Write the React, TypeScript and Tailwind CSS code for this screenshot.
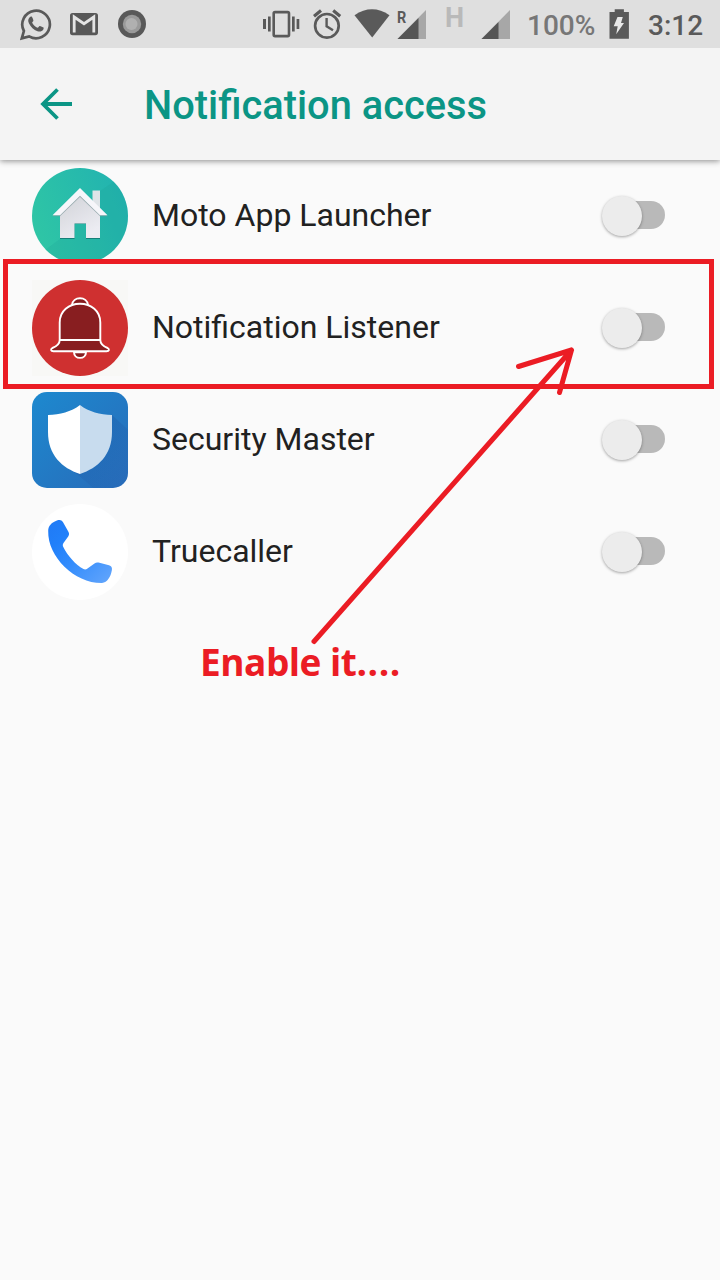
import type { ReactNode } from "react";

function WhatsAppIcon() {
  return (
    <svg className="ml-5 h-12 w-8 shrink-0" viewBox="20 0 32 48" fill="none">
      <path d="M21.8 38.400l2.100-7.400a13.800 13.800 0 1 1 5.200 5.400z" stroke="#5a5a5a" strokeWidth="2.700" strokeLinejoin="miter" />
      <path
        d="M31.200 16.600c-.6 0-1.200.3-1.700.9-1.400 1.400-1.700 3.500-.6 5.700 2.100 4 4.700 6.500 8.600 8 2.400.9 4.600.2 5.700-1.400.5-.8.6-1.900.3-2.200-.4-.5-2.900-1.600-3.700-1.700-.8-.1-1.500 1.900-2.300 1.800-1.900-.6-4.500-3.200-5.300-5-.2-.7 1.200-1.300 1.200-2.200 0-.7-1.100-3.200-1.500-3.700-.2-.2-.5-.2-.7-.2z"
        fill="#5a5a5a"
      />
    </svg>
  );
}

function GmailIcon() {
  return (
    <svg className="ml-[18px] h-12 w-7 shrink-0" viewBox="70 0 28 48" fill="none">
      <rect x="70" y="13" width="28" height="22.200" rx="2.600" fill="#585858" />
      <path d="M74.200 32.500V17L84 23.700 93.800 17v15.500" stroke="#e4e4e4" strokeWidth="2.800" />
    </svg>
  );
}

function RecordIcon() {
  return (
    <svg className="ml-5 h-12 w-[29px] shrink-0" viewBox="118 0 29 48">
      <circle cx="132" cy="24" r="14" fill="#595959" />
      <circle cx="132" cy="24" r="9.200" fill="#9a9a9a" />
      <circle cx="131.500" cy="24" r="6" fill="#b0b0b0" />
    </svg>
  );
}

function VibrateIcon() {
  return (
    <svg className="ml-[116px] h-12 w-[37px] shrink-0" viewBox="263 0 37 48">
      <rect x="273.700" y="12.100" width="15.300" height="24" rx="1.300" fill="none" stroke="#5a5a5a" strokeWidth="2.600" />
      <path d="M263 19h3v10h-3zM268 16.500h2.700v15H268zM292 16.500h2.700v15H292zM296.600 19h2.700v10h-2.700z" fill="#5a5a5a" />
    </svg>
  );
}

function AlarmIcon() {
  return (
    <svg className="ml-3 h-12 w-[30px] shrink-0" viewBox="312 0 30 48" fill="none" stroke="#5a5a5a">
      <circle cx="326.900" cy="25.800" r="11.800" strokeWidth="2.700" />
      <path d="M326.600 18v8.300l6.400 4" strokeWidth="2.400" />
      <path d="M314 16.200l7-5.600M333.200 10.600l7 5.600" strokeWidth="3.200" />
    </svg>
  );
}

function WifiIcon() {
  return (
    <svg className="ml-3 h-12 w-9 shrink-0" viewBox="354 0 36 48">
      <path d="M354.500 15.200Q372 3.500 389.500 15.200L372.200 37.600z" fill="#5a5a5a" />
    </svg>
  );
}

function SignalIcon({ split }: { split: number }) {
  return (
    <svg className="h-12 w-[29px] shrink-0" viewBox="0 0 29 48">
      <path d="M0.500 39L29 10v29z" fill="#a7a7a7" />
      <path d={`M0.500 39L${split} ${39.500 - split}V39z`} fill="#555" />
    </svg>
  );
}

function BatteryIcon() {
  return (
    <svg className="ml-[14px] h-12 w-5 shrink-0" viewBox="608.500 0 20 48">
      <path d="M609 12h5.200V9.300h9.200V12h5v26.800H609z" fill="#5a5a5a" />
      <path d="M617 17h5.300l-1.800 6h3l-7.800 11.300 1.500-8h-4z" fill="#e8e8e8" />
    </svg>
  );
}

function StatusBar() {
  return (
    <div className="relative z-20 flex h-12 items-center bg-[#dfdfdf] text-[28px] leading-[48px] font-medium">
      <WhatsAppIcon />
      <GmailIcon />
      <RecordIcon />
      <VibrateIcon />
      <AlarmIcon />
      <WifiIcon />
      <div className="relative ml-[7px] shrink-0">
        <SignalIcon split={21.5} />
        <span className="absolute top-[9px] left-0 origin-left scale-x-85 text-[17px] leading-[17px] font-bold text-[#5a5a5a]">R</span>
      </div>
      <span className="ml-[19px] w-5 shrink-0 pb-[12px] text-[27px] leading-[35px] font-bold text-[#b9b9b9]">H</span>
      <div className="ml-[16px] shrink-0">
        <SignalIcon split={17.5} />
      </div>
      <span className="ml-[17px] w-[68px] shrink-0 pt-[4px] text-[#777]">100%</span>
      <BatteryIcon />
      <span className="ml-[19px] shrink-0 pt-[4px] text-[#5a5a5a]">3:12</span>
    </div>
  );
}

function HomeAppIcon() {
  return (
    <svg className="size-24" viewBox="0 0 96 96">
      <defs>
        <linearGradient id="home-bg" x1="0" y1="0.700" x2="1" y2="0.300">
          <stop stopColor="#2fc6a5" />
          <stop offset="1" stopColor="#22b3b0" />
        </linearGradient>
        <linearGradient id="home-wall" x1="0" y1="0" x2="0.500" y2="1">
          <stop stopColor="#cfd1d6" />
          <stop offset="1" stopColor="#ececf2" />
        </linearGradient>
        <clipPath id="home-clip"><circle cx="48" cy="48" r="48" /></clipPath>
      </defs>
      <g clipPath="url(#home-clip)">
        <rect width="96" height="96" fill="url(#home-bg)" />
        <path d="M68 23L84 12 100 20v70L40 110 10 84 28 71z" fill="#1b9e94" opacity="0.220" />
      </g>
      <path d="M60.500 22.500h7.500v20h-7.500z" fill="#dfe4e8" />
      <path d="M28 71V44l20-19 20 19v27H54V56H42.500v15z" fill="#167f79" />
      <path d="M28 70V44l20-19 20 19v26H54V55.500H42.500V70z" fill="url(#home-wall)" />
      <path d="M20.500 48.300L48 21.500l27.500 26.800H68L48 29 28 48.300z" fill="#7f989b" opacity="0.700" />
      <path d="M20.500 47.300L48 20l27.500 27.300H68L48 27.800 28 47.300z" fill="#f6f6fa" />
    </svg>
  );
}

function BellAppIcon() {
  return (
    <svg className="size-24" viewBox="0 0 96 96">
      <rect width="96" height="96" fill="#f8f8f6" />
      <circle cx="48" cy="48" r="48" fill="#cf3030" />
      <g fill="#881e20" stroke="#fff" strokeWidth="1.900" strokeLinejoin="round">
        <path d="M42 72.200c0 3.300 2.500 5.700 6 5.700s6-2.400 6-5.700z" />
        <path d="M40 25c.5-4.500 4-6.800 8-6.800s7.500 2.300 8 6.800z" />
        <path d="M27.700 60V42.500C27.700 31 37 23.800 48 23.800S68.300 31 68.300 42.500V60c0 4.500 3.500 6.500 7.300 8 2.200 1.500 1.500 3.200-1 3.200H21.400c-2.500 0-3.200-1.700-1-3.200 3.800-1.500 7.300-3.500 7.300-8z" />
        <path d="M28 60h40.300" />
      </g>
    </svg>
  );
}

function ShieldAppIcon() {
  return (
    <svg className="size-24" viewBox="0 0 96 96">
      <defs>
        <linearGradient id="shield-bg" x1="0" y1="0" x2="1" y2="1">
          <stop stopColor="#1d89cf" />
          <stop offset="1" stopColor="#286bb9" />
        </linearGradient>
        <linearGradient id="shield-shade" x1="0.200" y1="0.200" x2="0.900" y2="0.900">
          <stop stopColor="#1e57a4" stopOpacity="0.400" />
          <stop offset="1" stopColor="#1e57a4" stopOpacity="0" />
        </linearGradient>
        <clipPath id="shield-clip"><rect width="96" height="96" rx="15" /></clipPath>
      </defs>
      <g clipPath="url(#shield-clip)">
        <rect width="96" height="96" fill="url(#shield-bg)" />
        <path d="M80 23l24 22v60H72L40 78z" fill="url(#shield-shade)" />
      </g>
      <path d="M48 13c-9 7-20 9.500-32 10v17c0 23 14 36 32 42z" fill="#fff" />
      <path d="M48 13c9 7 20 9.500 32 10v17c0 23-14 36-32 42z" fill="#c8dcee" />
    </svg>
  );
}

function PhoneAppIcon() {
  return (
    <svg className="size-24" viewBox="0 0 96 96">
      <defs>
        <linearGradient id="phone-fill" x1="0" y1="0" x2="1" y2="1">
          <stop stopColor="#207af5" />
          <stop offset="0.250" stopColor="#2180fa" />
          <stop offset="0.500" stopColor="#318bfc" />
          <stop offset="1" stopColor="#64a6fc" />
        </linearGradient>
      </defs>
      <circle cx="48" cy="48" r="48" fill="#fff" />
      <path
        d="M16.200 27c0-5 3-8.300 9.300-10.700 2.500-.9 4.300-.1 5.400 1.700l5.500 9.700c.9 1.600.9 3-.2 4.700l-4.700 6.600c-.9 1.300-.9 2.500-.2 3.900C35.500 51.500 43.500 60.500 51.500 65c1.400.8 2.700.5 4-.6l7-5c1.300-.9 2.500-1 4-.8l10.500 2.700c2.500.7 3.300 2.400 2.900 4.800-1.200 7-4.500 12.300-9.900 13C43 79.500 15.500 53 16.200 27z"
        fill="url(#phone-fill)"
      />
    </svg>
  );
}

function Toggle() {
  return (
    <div className="mr-[55px] mb-[2px] flex h-7 w-16 items-center">
      <div className="z-[1] mt-px ml-px size-10 shrink-0 rounded-full bg-[#ececec] shadow-[0_1px_3px_rgba(0,0,0,0.350)]" />
      <div className="-ml-5 h-7 flex-1 rounded-r-full bg-[#b9b9b9]" />
    </div>
  );
}

function AppRow({ icon, name }: { icon: ReactNode; name: string }) {
  return (
    <li className="flex h-28 items-center pl-8">
      {icon}
      <span className="ml-6 flex-1 pb-[3px] text-[32px] leading-10 text-[#212121]">{name}</span>
      <Toggle />
    </li>
  );
}

export default function App() {
  return (
    <div className="relative flex h-[1280px] w-[720px] flex-col overflow-hidden bg-[#fafafa] font-[Roboto,sans-serif]">
      <StatusBar />
      <header className="z-10 flex h-28 items-center bg-[#f4f4f4] shadow-[0_1px_6px_rgba(0,0,0,0.450)]">
        <svg className="ml-10 h-8 w-8" viewBox="0 0 32 32" fill="none" stroke="#0b9585" strokeWidth="3.800">
          <path d="M32 16H3M17.500 1.500L3 16l14.500 14.500" />
        </svg>
        <h1 className="ml-[72px] pt-[4px] text-[39.8px] leading-[48px] font-medium text-[#0b9585]">Notification access</h1>
      </header>
      <ul>
        <AppRow icon={<HomeAppIcon />} name="Moto App Launcher" />
        <AppRow icon={<BellAppIcon />} name="Notification Listener" />
        <AppRow icon={<ShieldAppIcon />} name="Security Master" />
        <AppRow icon={<PhoneAppIcon />} name="Truecaller" />
      </ul>
      <div className="absolute top-[259px] left-[3px] z-20 h-[130px] w-[711px] border-5 border-[#eb1c24]" />
      <svg className="absolute top-[340px] left-[300px] z-20 h-[310px] w-[290px]" viewBox="300 340 290 310" fill="none" stroke="#eb1c24" strokeWidth="5" strokeLinecap="round" strokeLinejoin="round">
        <path d="M314 641.500L571.500 350M518.500 366.500L571.500 350L559.500 392.500" />
      </svg>
      <p className="absolute top-[637px] left-[200px] z-20 font-['Open_Sans',sans-serif] text-[37px] leading-[50px] font-bold tracking-[-0.5px] whitespace-nowrap text-[#eb1c24]">
        Enable it<span className="tracking-[0.600px]">....</span>
      </p>
    </div>
  );
}
